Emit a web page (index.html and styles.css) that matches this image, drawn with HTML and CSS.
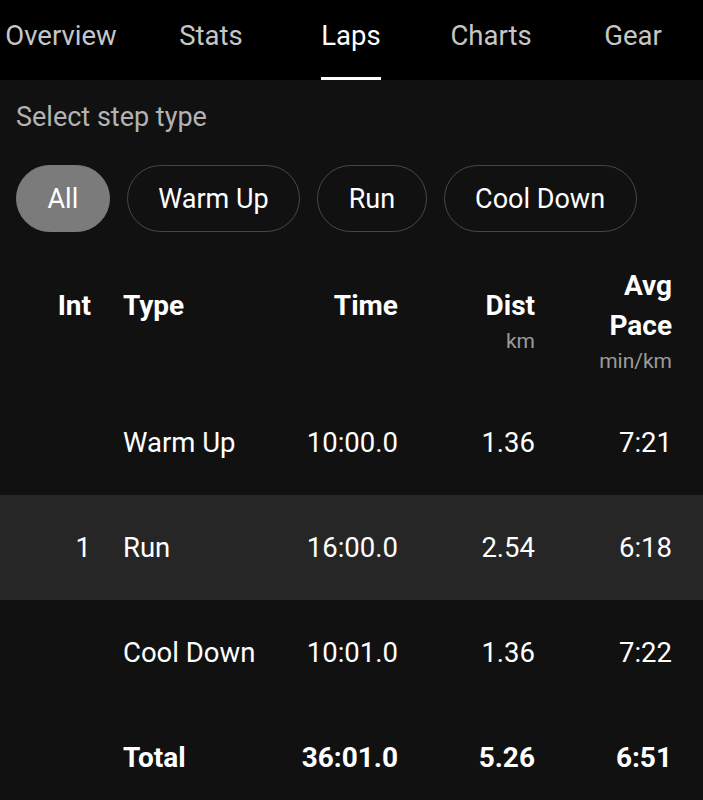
FILE: index.html
```html
<!DOCTYPE html>
<html>
<head>
  <title>Laps</title>
  <link rel="stylesheet" href="styles.css">
</head>
<body>

<div class="tabs">
  <div class="tab"><span>Overview</span></div>
  <div class="tab"><span>Stats</span></div>
  <div class="tab active"><span>Laps</span></div>
  <div class="tab"><span>Charts</span></div>
  <div class="tab"><span>Gear</span></div>
</div>

<div class="content">
  <p class="filter-label">Select step type</p>

  <div class="chips">
    <div class="chip selected">All</div>
    <div class="chip">Warm Up</div>
    <div class="chip">Run</div>
    <div class="chip">Cool Down</div>
  </div>

  <div class="laps">
    <div class="lap-row head">
      <div class="cell num">Int</div>
      <div class="cell type">Type</div>
      <div class="cell num">Time</div>
      <div class="cell num">Dist<span class="unit">km</span></div>
      <div class="cell num pace">Avg<br>Pace<span class="unit">min/km</span></div>
    </div>

    <div class="lap-row">
      <div class="cell num"></div>
      <div class="cell type">Warm Up</div>
      <div class="cell num">10:00.0</div>
      <div class="cell num">1.36</div>
      <div class="cell num">7:21</div>
    </div>
    <div class="lap-row shaded">
      <div class="cell num">1</div>
      <div class="cell type">Run</div>
      <div class="cell num">16:00.0</div>
      <div class="cell num">2.54</div>
      <div class="cell num">6:18</div>
    </div>
    <div class="lap-row">
      <div class="cell num"></div>
      <div class="cell type">Cool Down</div>
      <div class="cell num">10:01.0</div>
      <div class="cell num">1.36</div>
      <div class="cell num">7:22</div>
    </div>
    <div class="lap-row total">
      <div class="cell num"></div>
      <div class="cell type">Total</div>
      <div class="cell num">36:01.0</div>
      <div class="cell num">5.26</div>
      <div class="cell num">6:51</div>
    </div>
  </div>
</div>

</body>
</html>
```

FILE: styles.css
```css
body {
  font-family: Roboto, 'Noto Sans', sans-serif;
  background-color: #111;
  color: #fff;
  margin: 0;
  padding: 0;
  overflow: hidden;
}
.tabs {
  background-color: #000;
  height: 80px;
  display: grid;
  grid-template-columns: 122px 178px 102px 178px 106px;
}
.tab {
  display: flex;
  justify-content: center;
  align-items: flex-end;
}
.tab span {
  font-size: 27.5px;
  color: #c6c6c6;
  line-height: 30px;
  padding-bottom: 26px;
  border-bottom: 3px solid transparent;
}
.tab.active span {
  color: #fff;
  border-bottom-color: #fff;
}
.filter-label {
  margin: 0;
  padding: 20px 16px 0;
  font-size: 27px;
  line-height: 34px;
  color: #b3b3b3;
}
.chips {
  display: flex;
  gap: 17px;
  padding: 31px 16px 0;
}
.chip {
  height: 65px;
  padding: 0 30.5px;
  border: 1.5px solid #474747;
  border-radius: 34px;
  font-size: 27px;
  line-height: 67px;
}
.chip.selected {
  background-color: #7b7b7b;
  border-color: #7b7b7b;
}
.lap-row {
  display: grid;
  grid-template-columns: 91px 192px 115px 137px 137px;
  height: 105px;
  align-items: center;
  font-size: 27.5px;
}
.lap-row.shaded {
  background-color: #262626;
}
.lap-row.head {
  height: auto;
  align-items: start;
  padding: 54px 0 14px;
  font-weight: bold;
  font-size: 28px;
  line-height: 40px;
}
.lap-row.total {
  font-weight: bold;
  font-size: 28px;
}
.cell.num {
  text-align: right;
}
.cell.type {
  padding-left: 32px;
}
.cell.pace {
  margin-top: -20px;
}
.unit {
  display: block;
  font-weight: normal;
  font-size: 21px;
  line-height: 30px;
  color: #9c9c9c;
}
```
